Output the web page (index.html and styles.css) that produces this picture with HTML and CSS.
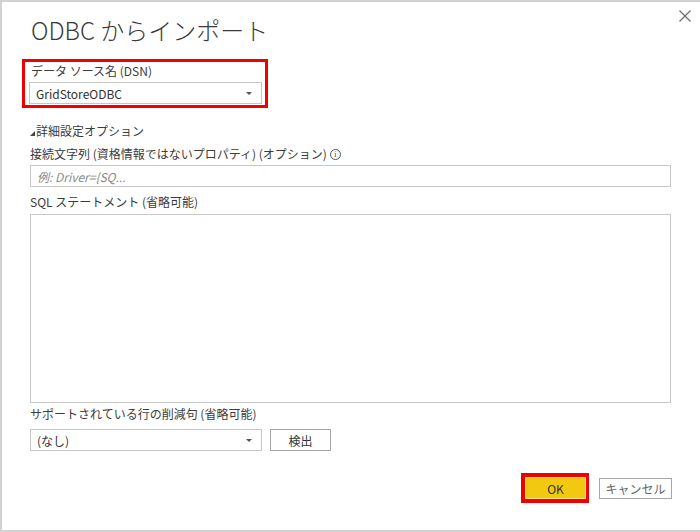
FILE: index.html
```html
<!DOCTYPE html>
<html lang="ja">
<head>
<meta charset="utf-8">
<link rel="stylesheet" href="styles.css">
</head>
<body>
<div class="dialog">
  <div class="header">
    <h1 class="title">ODBC からインポート</h1>
    <div class="close" aria-label="閉じる">
      <svg width="12" height="12" viewBox="0 0 12 12"><path d="M0.5 0.5 L11.5 11.5 M11.5 0.5 L0.5 11.5" stroke="#6a6a6a" stroke-width="1.2" fill="none"/></svg>
    </div>
  </div>
  <div class="content">
    <div class="highlight dsn">
      <div class="label">データ ソース名 (DSN)</div>
      <div class="select select-dsn"><span>GridStoreODBC</span><span class="caret"></span></div>
    </div>
    <div class="advanced"><span class="tri"></span>詳細設定オプション</div>
    <div class="label conn">接続文字列 (資格情報ではないプロパティ) (オプション)<span class="info">i</span></div>
    <div class="input"><span class="placeholder">例: Driver={SQ...</span></div>
    <div class="label sql">SQL ステートメント (省略可能)</div>
    <div class="textarea"></div>
    <div class="label reduce">サポートされている行の削減句 (省略可能)</div>
    <div class="row">
      <div class="select select-reduce"><span>(なし)</span><span class="caret"></span></div>
      <div class="btn detect">検出</div>
    </div>
  </div>
  <div class="footer">
    <div class="highlight ok-wrap"><div class="btn ok">OK</div></div>
    <div class="btn cancel">キャンセル</div>
  </div>
</div>
</body>
</html>
```

FILE: styles.css
```css
html, body {
  margin: 0;
  padding: 0;
  background: #ffffff;
}
body {
  font-family: "Noto Sans CJK JP", "Noto Sans", sans-serif;
  color: #3b3b3b;
  font-size: 12px;
}
.dialog {
  width: 698px;
  height: 528px;
  border-top: 2px solid #d2d2d2;
  border-left: 2px solid #d2d2d2;
  border-bottom: 2px solid #d2d2d2;
  display: flex;
  flex-direction: column;
  background: #fff;
}
.header {
  display: flex;
  justify-content: space-between;
  align-items: flex-start;
  height: 57px;
}
.title {
  margin: 13px 0 0 29px;
  font-size: 24px;
  font-weight: 300;
  line-height: 30px;
  color: #3a3a3a;
  letter-spacing: 0;
}
.close {
  margin: 8px 9px 0 0;
  width: 12px;
  height: 12px;
}
.close svg { display: block; }
.content {
  display: flex;
  flex-direction: column;
  padding-left: 28px;
}
.highlight {
  border: 3px solid #f00000;
}
.dsn {
  width: 233px;
  margin-left: -8px;
  padding: 1px 3px 1px 4px;
  display: flex;
  flex-direction: column;
}
.label {
  line-height: 16px;
  white-space: nowrap;
}
.dsn .label {
  margin: 0 0 3px 2px;
}
.select {
  box-sizing: border-box;
  height: 22px;
  border: 1px solid #c6c6c6;
  display: flex;
  align-items: center;
  justify-content: space-between;
  padding: 0 9px 0 6px;
  color: #333;
}
.select-dsn { width: 233px; }
.caret {
  width: 0;
  height: 0;
  border-left: 3px solid transparent;
  border-right: 3px solid transparent;
  border-top: 3px solid #555;
}
.advanced {
  margin-top: 15px;
  line-height: 16px;
  display: flex;
  align-items: center;
}
.tri {
  width: 0;
  height: 0;
  border-left: 5px solid transparent;
  border-bottom: 5px solid #444;
  margin: 4px 1px 0 0;
}
.conn {
  margin-top: 7px;
  display: flex;
  align-items: center;
}
.info {
  box-sizing: border-box;
  width: 11px;
  height: 11px;
  border: 1px solid #555;
  border-radius: 50%;
  font-size: 8px;
  line-height: 9px;
  text-align: center;
  margin-left: 3px;
  font-family: "Liberation Serif", serif;
}
.input {
  box-sizing: border-box;
  width: 641px;
  height: 22px;
  margin-top: 3px;
  border: 1px solid #c8c8c8;
  display: flex;
  align-items: center;
  padding-left: 6px;
}
.placeholder {
  color: #8a8a8a;
  font-style: italic;
}
.sql { margin-top: 7px; }
.textarea {
  box-sizing: border-box;
  width: 641px;
  height: 189px;
  margin-top: 4px;
  border: 1px solid #c8c8c8;
}
.reduce { margin-top: 3px; }
.row {
  display: flex;
  gap: 8px;
  margin-top: 7px;
}
.select-reduce { width: 232px; }
.btn {
  box-sizing: border-box;
  display: flex;
  align-items: center;
  justify-content: center;
  border: 1px solid #a6a6a6;
  height: 21px;
  color: #333;
}
.detect { width: 61px; height: 22px; }
.footer {
  display: flex;
  justify-content: flex-end;
  align-items: center;
  gap: 10px;
  margin-top: auto;
  margin-bottom: 27px;
  padding-right: 28px;
}
.ok-wrap {
  border-width: 4px 3px 4px 4px;
  padding: 0;
}
.ok {
  width: 61px;
  height: 22px;
  background: #f2c811;
  border: 1px solid #f7e28a;
  color: #333;
}
.cancel {
  width: 73px;
  color: #666;
}
```
